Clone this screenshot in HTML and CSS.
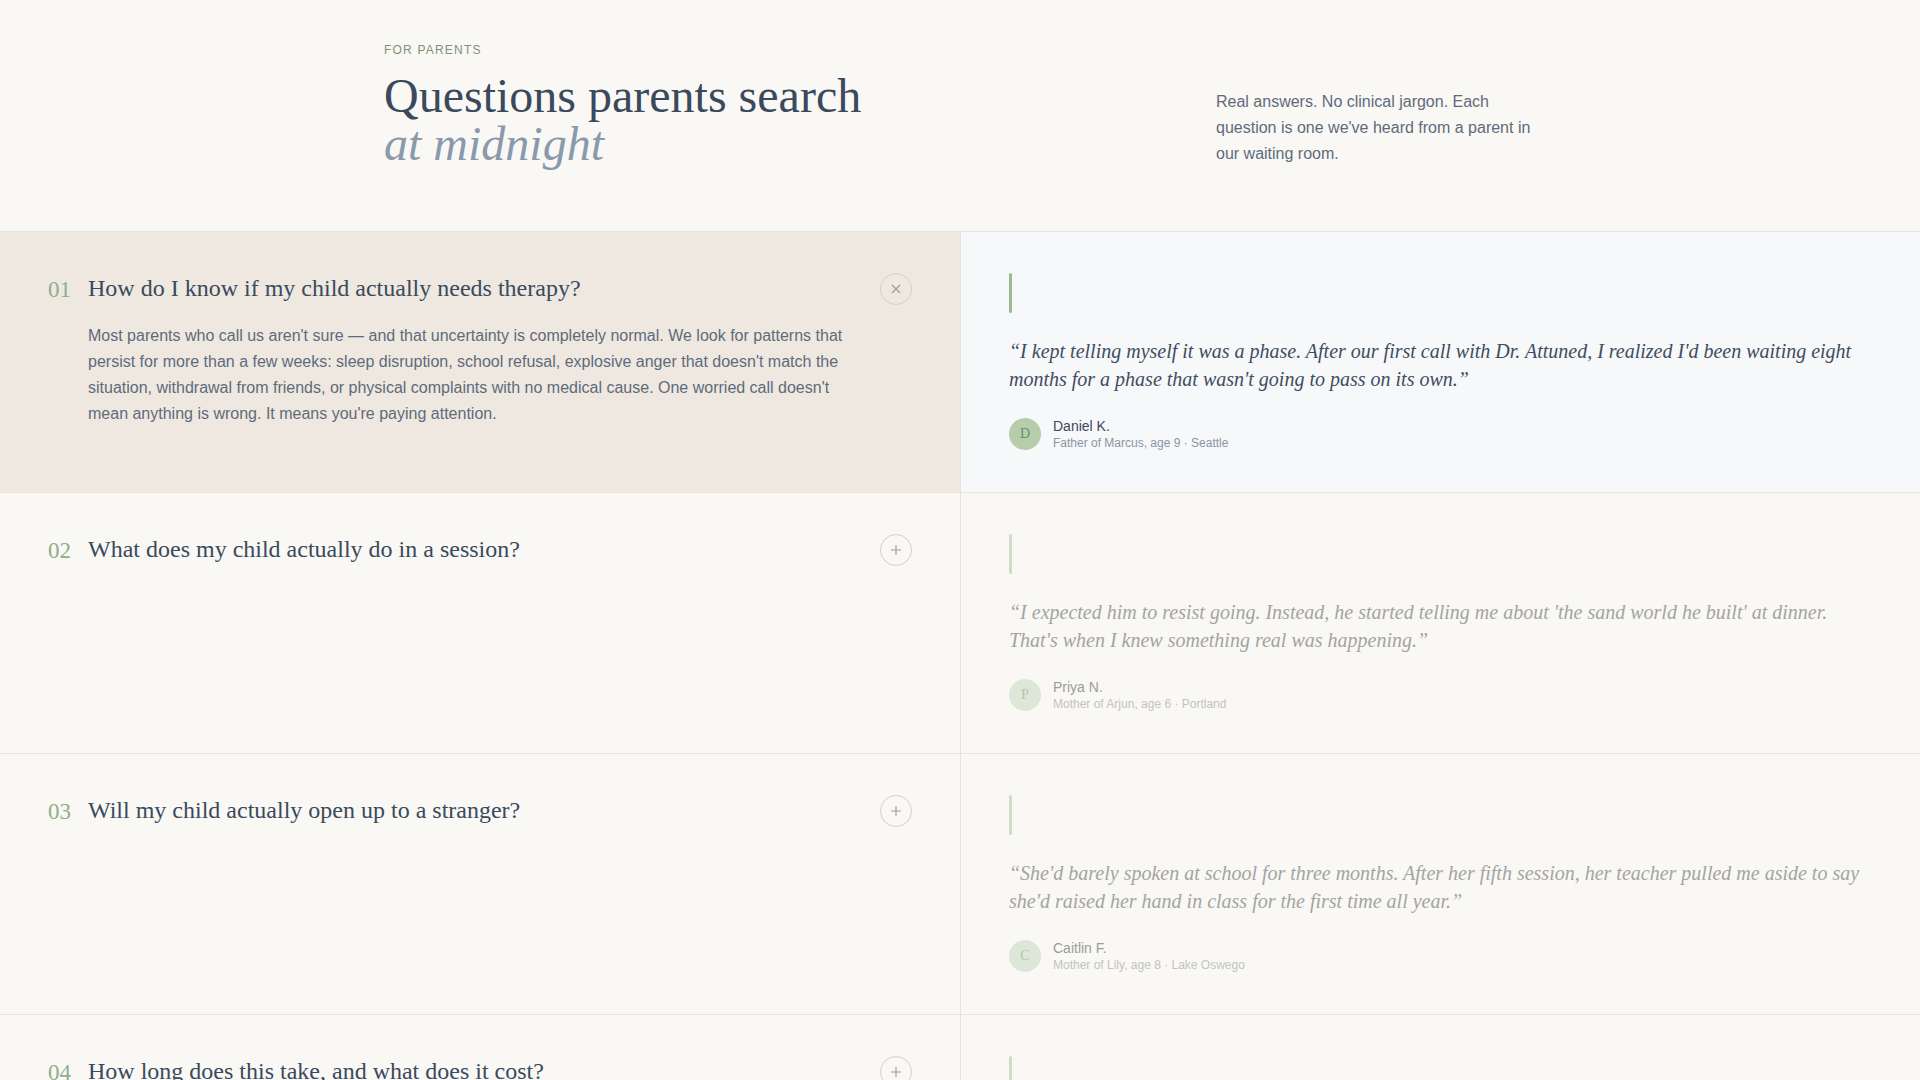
FILE: index.html
```
<!DOCTYPE html>
<html lang="en">
<head>
    <meta charset="UTF-8">
    <meta name="viewport" content="width=device-width, initial-scale=1.0">
    <title>For Parents - Questions parents search at midnight</title>
    <link rel="stylesheet" href="styles.css">
</head>
<body>
    <header class="intro">
        <div class="intro-title">
            <p class="eyebrow">FOR PARENTS</p>
            <h1>Questions parents search<br><em>at midnight</em></h1>
        </div>
        <p class="intro-text">Real answers. No clinical jargon. Each question is one we've heard from a parent in our waiting room.</p>
    </header>

    <section class="faq">
        <div class="faq-row is-open">
            <div class="faq-q">
                <div class="q-head">
                    <span class="q-num">01</span>
                    <h3>How do I know if my child actually needs therapy?</h3>
                    <button class="toggle" aria-label="Close">
                        <svg width="12" height="12" viewBox="0 0 12 12"><path d="M2 2L10 10M10 2L2 10" stroke="currentColor" stroke-width="1.1" fill="none"/></svg>
                    </button>
                </div>
                <p class="answer">Most parents who call us aren't sure — and that uncertainty is completely normal. We look for patterns that persist for more than a few weeks: sleep disruption, school refusal, explosive anger that doesn't match the situation, withdrawal from friends, or physical complaints with no medical cause. One worried call doesn't mean anything is wrong. It means you're paying attention.</p>
            </div>
            <div class="faq-quote">
                <span class="bar"></span>
                <blockquote>“I kept telling myself it was a phase. After our first call with Dr. Attuned, I realized I'd been waiting eight months for a phase that wasn't going to pass on its own.”</blockquote>
                <div class="author">
                    <span class="avatar">D</span>
                    <div>
                        <div class="name">Daniel K.</div>
                        <div class="meta">Father of Marcus, age 9 · Seattle</div>
                    </div>
                </div>
            </div>
        </div>

        <div class="faq-row">
            <div class="faq-q">
                <div class="q-head">
                    <span class="q-num">02</span>
                    <h3>What does my child actually do in a session?</h3>
                    <button class="toggle" aria-label="Open">
                        <svg width="12" height="12" viewBox="0 0 12 12"><path d="M6 1V11M1 6H11" stroke="currentColor" stroke-width="1.1" fill="none"/></svg>
                    </button>
                </div>
            </div>
            <div class="faq-quote">
                <span class="bar"></span>
                <blockquote>“I expected him to resist going. Instead, he started telling me about 'the sand world he built' at dinner. That's when I knew something real was happening.”</blockquote>
                <div class="author">
                    <span class="avatar">P</span>
                    <div>
                        <div class="name">Priya N.</div>
                        <div class="meta">Mother of Arjun, age 6 · Portland</div>
                    </div>
                </div>
            </div>
        </div>

        <div class="faq-row">
            <div class="faq-q">
                <div class="q-head">
                    <span class="q-num">03</span>
                    <h3>Will my child actually open up to a stranger?</h3>
                    <button class="toggle" aria-label="Open">
                        <svg width="12" height="12" viewBox="0 0 12 12"><path d="M6 1V11M1 6H11" stroke="currentColor" stroke-width="1.1" fill="none"/></svg>
                    </button>
                </div>
            </div>
            <div class="faq-quote">
                <span class="bar"></span>
                <blockquote>“She'd barely spoken at school for three months. After her fifth session, her teacher pulled me aside to say she'd raised her hand in class for the first time all year.”</blockquote>
                <div class="author">
                    <span class="avatar">C</span>
                    <div>
                        <div class="name">Caitlin F.</div>
                        <div class="meta">Mother of Lily, age 8 · Lake Oswego</div>
                    </div>
                </div>
            </div>
        </div>

        <div class="faq-row">
            <div class="faq-q">
                <div class="q-head">
                    <span class="q-num">04</span>
                    <h3>How long does this take, and what does it cost?</h3>
                    <button class="toggle" aria-label="Open">
                        <svg width="12" height="12" viewBox="0 0 12 12"><path d="M6 1V11M1 6H11" stroke="currentColor" stroke-width="1.1" fill="none"/></svg>
                    </button>
                </div>
            </div>
            <div class="faq-quote">
                <span class="bar"></span>
                <blockquote>“We were told to expect months. We saw real change in eight weeks, and the sliding scale made it possible for us.”</blockquote>
                <div class="author">
                    <span class="avatar">M</span>
                    <div>
                        <div class="name">Marisol T.</div>
                        <div class="meta">Mother of Noah, age 11 · Tacoma</div>
                    </div>
                </div>
            </div>
        </div>
    </section>
</body>
</html>
```

FILE: styles.css
```
body {
    margin: 0;
    background-color: #f9f8f5;
    font-family: 'Liberation Sans', Arial, sans-serif;
    color: #3b4a5b;
}
.intro {
    max-width: 1152px;
    margin: 0 auto;
    padding: 42px 0 63px;
    display: flex;
    justify-content: space-between;
    align-items: flex-end;
}
.eyebrow {
    margin: 0 0 14px;
    font-size: 12px;
    line-height: 16px;
    letter-spacing: 0.1em;
    color: #7d9378;
}
h1 {
    margin: 0;
    font-family: 'Liberation Serif', 'Times New Roman', serif;
    font-weight: normal;
    font-size: 48px;
    line-height: 1;
    color: #3a4a5c;
}
h1 em {
    color: #8a9aac;
}
.intro-text {
    width: 320px;
    margin: 0 0 1px;
    font-size: 16px;
    line-height: 26px;
    color: #5f6b7a;
}
.faq {
    border-top: 1px solid #e6e3dd;
}
.faq-row {
    display: grid;
    grid-template-columns: 1fr 1fr;
    border-bottom: 1px solid #e6e3dd;
}
.faq-q {
    padding: 39px 48px 40px;
}
.q-head {
    display: flex;
    align-items: center;
}
.q-num {
    flex: 0 0 40px;
    font-family: 'Liberation Serif', 'Times New Roman', serif;
    font-size: 23px;
    color: #8fae8a;
    padding-top: 4px;
}
.q-head h3 {
    flex: 1;
    margin: 0;
    font-family: 'Liberation Serif', 'Times New Roman', serif;
    font-weight: normal;
    font-size: 24px;
    line-height: 32px;
    color: #3a4a5c;
}
.toggle {
    width: 32px;
    height: 32px;
    margin-top: 2px;
    border: 1px solid #d3cfc9;
    border-radius: 50%;
    background: transparent;
    color: #9a9a98;
    display: flex;
    align-items: center;
    justify-content: center;
    padding: 0;
}
.answer {
    margin: 18px 0 0 40px;
    max-width: 770px;
    font-size: 16px;
    line-height: 26px;
    color: #5f6b7a;
}
.faq-quote {
    padding: 41px 48px;
    border-left: 1px solid #e6e3dd;
    display: flex;
    flex-direction: column;
    align-items: flex-start;
}
.bar {
    width: 3px;
    height: 40px;
    border-radius: 2px;
    background-color: #cfdcca;
    margin-bottom: 24px;
}
blockquote {
    margin: 0 0 24px;
    font-family: 'Liberation Serif', 'Times New Roman', serif;
    font-style: italic;
    font-size: 20px;
    line-height: 28px;
    color: #a3a4a2;
}
.author {
    display: flex;
    align-items: center;
    gap: 12px;
}
.avatar {
    width: 32px;
    height: 32px;
    border-radius: 50%;
    background-color: #dde7d8;
    color: #b4c6ad;
    font-family: 'Liberation Serif', 'Times New Roman', serif;
    font-size: 14px;
    display: flex;
    align-items: center;
    justify-content: center;
}
.name {
    font-size: 14px;
    line-height: 18px;
    color: #9c9c9a;
}
.meta {
    font-size: 12px;
    line-height: 16px;
    color: #c3c3bf;
}

/* open row */
.is-open .faq-q {
    background-color: #eee8e1;
}
.is-open .faq-quote {
    background-color: #f6f8fa;
}
.is-open .bar {
    background-color: #9db894;
}
.is-open blockquote {
    color: #3f4d5e;
}
.is-open .avatar {
    background-color: #b6cdab;
    color: #6f8d69;
}
.is-open .name {
    color: #3b4a5b;
}
.is-open .meta {
    color: #8a95a3;
}
```
